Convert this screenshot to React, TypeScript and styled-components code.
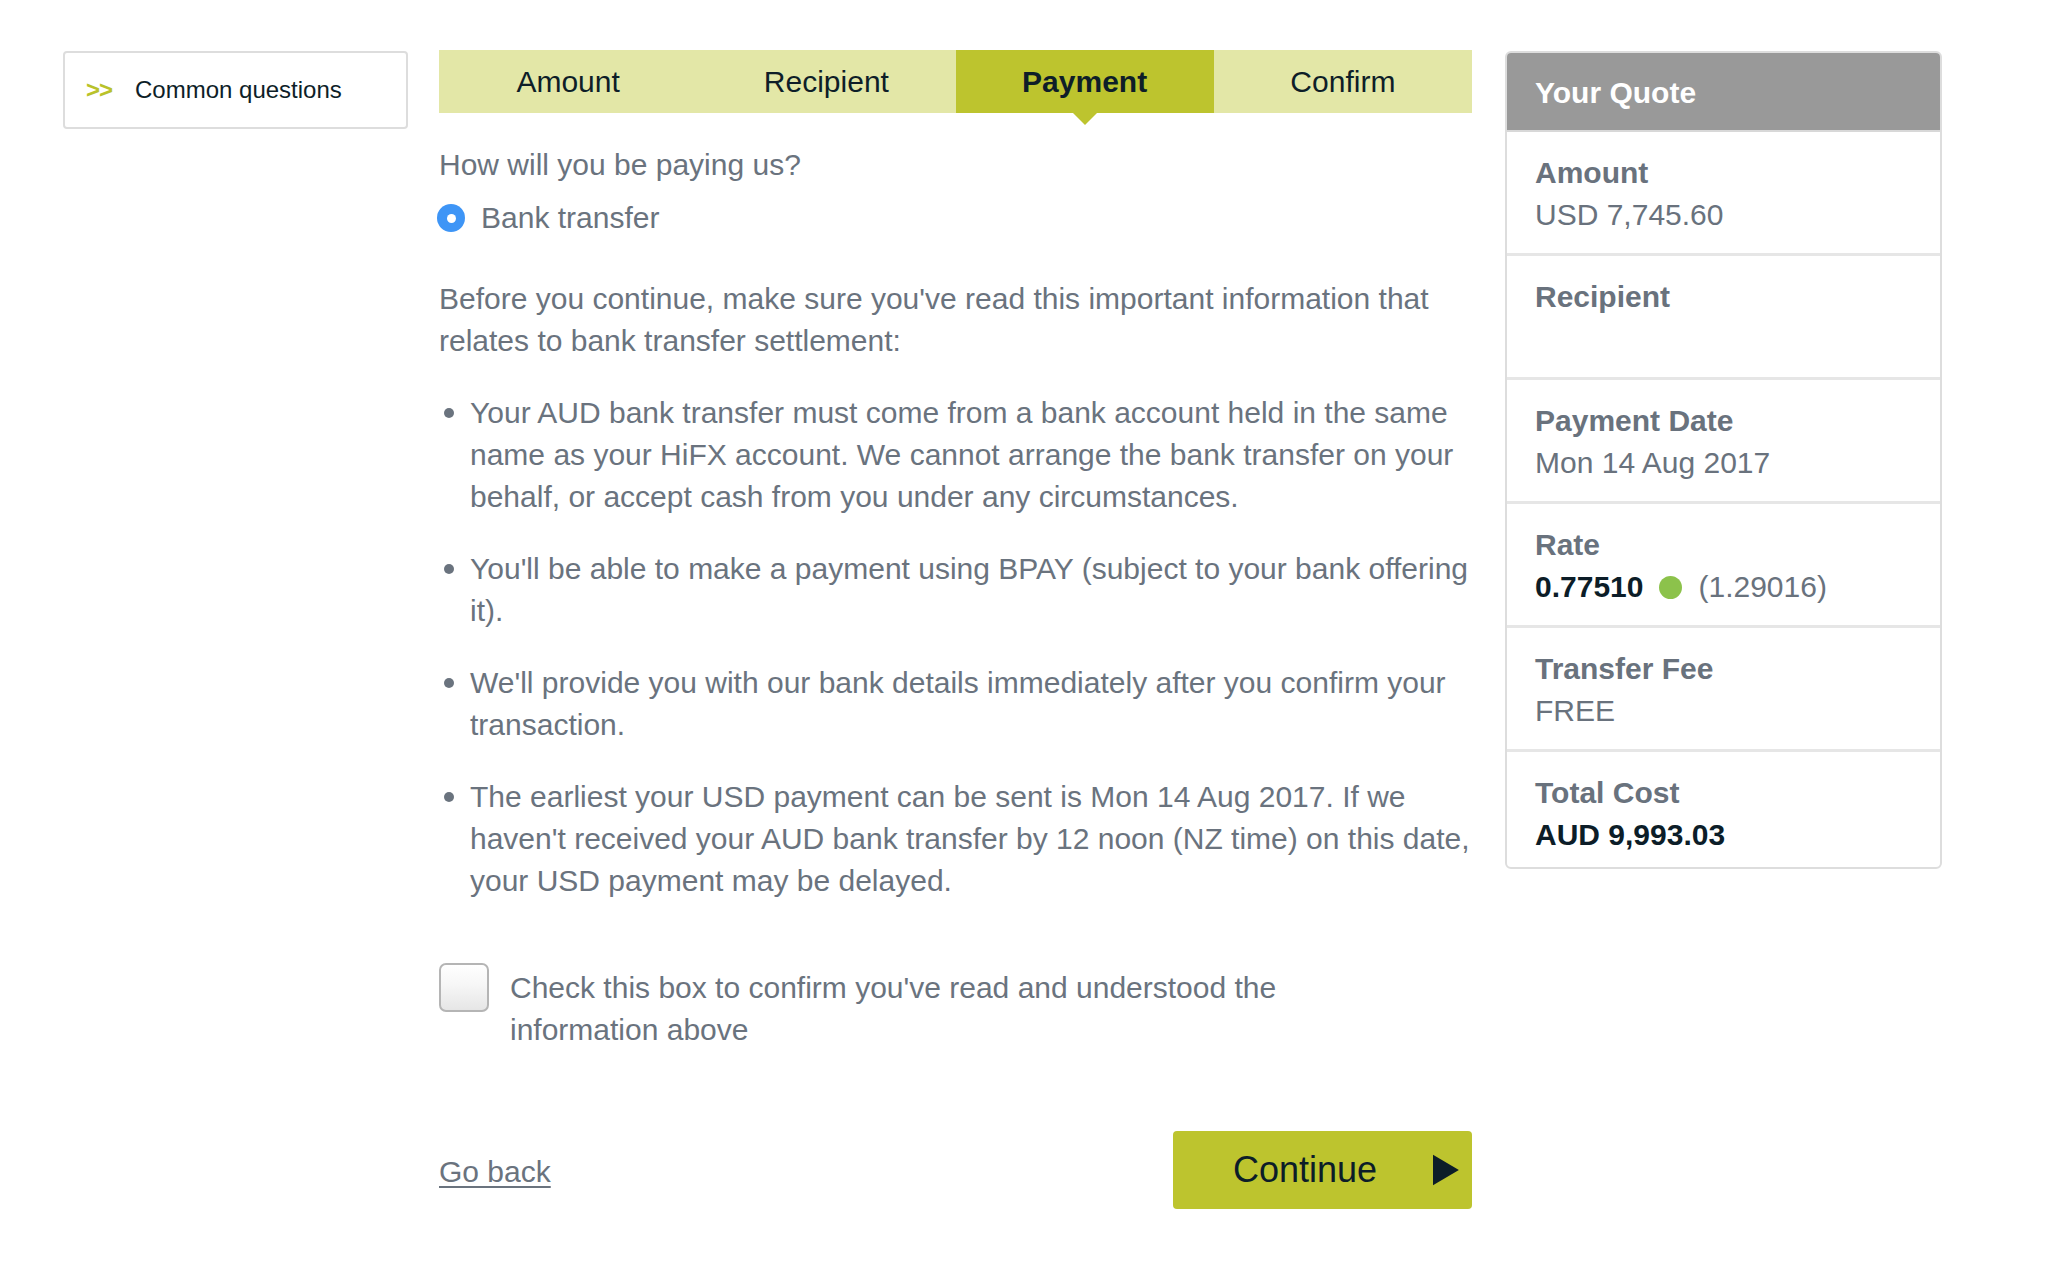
import React from "react";
import styled, { createGlobalStyle } from "styled-components";

const GlobalStyle = createGlobalStyle`
  html, body { margin: 0; padding: 0; background: #ffffff; }
  body { font-family: "Liberation Sans", Arial, Helvetica, sans-serif; color: #6a737e; }
  * { box-sizing: border-box; }
`;

const Page = styled.div`
  display: flex;
  align-items: flex-start;
  padding: 50px 0 0 63px;
  width: 2057px;
  min-height: 1280px;
`;

const Sidebar = styled.aside`
  width: 345px;
  flex: none;
  margin-top: 1px;
`;

const HelpBox = styled.a`
  display: flex;
  align-items: center;
  height: 78px;
  border: 2px solid #dddddd;
  border-radius: 4px;
  padding-left: 21px;
  font-size: 24px;
  color: #0e1e28;
  text-decoration: none;
`;

const Chevrons = styled.span`
  color: #b9c22a;
  font-weight: bold;
  font-size: 24px;
  letter-spacing: -1px;
  margin-right: 23px;
`;

const Main = styled.main`
  width: 1033px;
  flex: none;
  margin-left: 31px;
`;

const Tabs = styled.nav`
  display: grid;
  grid-template-columns: repeat(4, 1fr);
  height: 63px;
  background: #e3e7a7;
`;

const Tab = styled.div<{ $active?: boolean }>`
  position: relative;
  display: flex;
  align-items: center;
  justify-content: center;
  font-size: 30px;
  color: #0e1e28;
  font-weight: ${(p) => (p.$active ? "bold" : "normal")};
  background: ${(p) => (p.$active ? "#bdc42e" : "transparent")};
  &::after {
    content: "";
    display: ${(p) => (p.$active ? "block" : "none")};
    position: absolute;
    left: 50%;
    top: 100%;
    margin-left: -12px;
    border-left: 12px solid transparent;
    border-right: 12px solid transparent;
    border-top: 12px solid #bdc42e;
  }
`;

const Text = styled.p<{ $top?: number }>`
  margin: ${(p) => p.$top ?? 0}px 0 0;
  font-size: 30px;
  line-height: 42px;
  color: #6a737e;
`;

const RadioRow = styled.label`
  display: flex;
  align-items: center;
  gap: 16px;
  margin-top: 11px;
  font-size: 30px;
  line-height: 42px;
  color: #6a737e;
`;

const Radio = styled.span`
  width: 28px;
  height: 28px;
  margin-left: -2px;
  border-radius: 50%;
  background: #3e95f6;
  display: flex;
  align-items: center;
  justify-content: center;
  &::before {
    content: "";
    width: 9px;
    height: 9px;
    border-radius: 50%;
    background: #ffffff;
  }
`;

const List = styled.ul`
  list-style: none;
  margin: 30px 0 0;
  padding: 0;
`;

const Item = styled.li`
  display: flex;
  align-items: flex-start;
  font-size: 30px;
  line-height: 42px;
  color: #6a737e;
  & + & { margin-top: 30px; }
`;

const Dot = styled.span`
  flex: none;
  width: 10px;
  height: 10px;
  border-radius: 50%;
  background: #6a737e;
  margin: 16px 16px 0 5px;
`;

const CheckRow = styled.label`
  display: flex;
  align-items: flex-start;
  gap: 21px;
  margin-top: 61px;
`;

const CheckBox = styled.span`
  flex: none;
  width: 50px;
  height: 49px;
  border: 2px solid #b5b5b5;
  border-radius: 7px;
  background: linear-gradient(#ffffff, #f6f6f6 45%, #e6e6e6);
`;

const CheckText = styled.span`
  max-width: 820px;
  margin-top: 4px;
  font-size: 30px;
  line-height: 42px;
  color: #6a737e;
`;

const Actions = styled.div`
  display: flex;
  align-items: center;
  justify-content: space-between;
  margin-top: 80px;
`;

const BackLink = styled.a`
  font-size: 30px;
  color: #6a737e;
  text-decoration: underline;
  text-underline-offset: 4px;
  text-decoration-thickness: 2px;
  margin-top: 3px;
`;

const ContinueButton = styled.button`
  display: flex;
  align-items: center;
  width: 299px;
  height: 78px;
  padding: 0 13px 0 60px;
  gap: 56px;
  border: none;
  border-radius: 4px;
  background: #bdc42e;
  font-family: "Liberation Sans", Arial, sans-serif;
  font-size: 36px;
  color: #0c1d28;
  cursor: pointer;
`;

const Quote = styled.section`
  width: 437px;
  flex: none;
  margin-left: 33px;
  margin-top: 1px;
  border: 2px solid #dddddd;
  border-radius: 6px;
  overflow: hidden;
`;

const QuoteHeader = styled.h2`
  margin: 0;
  height: 79px;
  display: flex;
  align-items: center;
  padding: 2px 28px 0;
  background: #999999;
  border-bottom: 2px solid #d8d8d8;
  color: #ffffff;
  font-size: 30px;
  font-weight: bold;
`;

const QuoteRow = styled.div`
  padding: 20px 28px 17px;
  border-bottom: 3px solid #e6e6e6;
  min-height: 124px;
  &:last-child {
    border-bottom: none;
    min-height: 0;
    padding-bottom: 11px;
  }
`;

const QuoteLabel = styled.div`
  font-size: 30px;
  line-height: 42px;
  font-weight: bold;
  color: #69727d;
`;

const QuoteValue = styled.div<{ $strong?: boolean }>`
  display: flex;
  align-items: center;
  min-height: 42px;
  font-size: 30px;
  line-height: 42px;
  font-weight: ${(p) => (p.$strong ? "bold" : "normal")};
  color: ${(p) => (p.$strong ? "#0c1d28" : "#69727d")};
`;

const Inverse = styled.span`
  font-weight: normal;
  color: #69727d;
`;

const StatusDot = styled.span`
  width: 23px;
  height: 23px;
  border-radius: 50%;
  background: #8cc24b;
  margin: 0 16px;
`;

const PlayIcon = () => (
  <svg width="27" height="32" viewBox="0 0 27 32" aria-hidden="true">
    <polygon points="0,0 27,16 0,32" fill="#0c1d28" />
  </svg>
);

const bullets = [
  "Your AUD bank transfer must come from a bank account held in the same name as your HiFX account. We cannot arrange the bank transfer on your behalf, or accept cash from you under any circumstances.",
  "You'll be able to make a payment using BPAY (subject to your bank offering it).",
  "We'll provide you with our bank details immediately after you confirm your transaction.",
  "The earliest your USD payment can be sent is Mon 14 Aug 2017. If we haven't received your AUD bank transfer by 12 noon (NZ time) on this date, your USD payment may be delayed.",
];

export default function App() {
  return (
    <>
      <GlobalStyle />
      <Page>
        <Sidebar>
          <HelpBox href="#">
            <Chevrons>&gt;&gt;</Chevrons>
            Common questions
          </HelpBox>
        </Sidebar>

        <Main>
          <Tabs>
            <Tab>Amount</Tab>
            <Tab>Recipient</Tab>
            <Tab $active>Payment</Tab>
            <Tab>Confirm</Tab>
          </Tabs>

          <Text $top={31}>How will you be paying us?</Text>
          <RadioRow>
            <Radio />
            Bank transfer
          </RadioRow>

          <Text $top={39}>
            Before you continue, make sure you've read this important information that
            relates to bank transfer settlement:
          </Text>

          <List>
            {bullets.map((b) => (
              <Item key={b}>
                <Dot />
                <span>{b}</span>
              </Item>
            ))}
          </List>

          <CheckRow>
            <CheckBox />
            <CheckText>Check this box to confirm you've read and understood the information above</CheckText>
          </CheckRow>

          <Actions>
            <BackLink href="#">Go back</BackLink>
            <ContinueButton>
              Continue
              <PlayIcon />
            </ContinueButton>
          </Actions>
        </Main>

        <Quote>
          <QuoteHeader>Your Quote</QuoteHeader>
          <QuoteRow>
            <QuoteLabel>Amount</QuoteLabel>
            <QuoteValue>USD 7,745.60</QuoteValue>
          </QuoteRow>
          <QuoteRow>
            <QuoteLabel>Recipient</QuoteLabel>
            <QuoteValue />
          </QuoteRow>
          <QuoteRow>
            <QuoteLabel>Payment Date</QuoteLabel>
            <QuoteValue>Mon 14 Aug 2017</QuoteValue>
          </QuoteRow>
          <QuoteRow>
            <QuoteLabel>Rate</QuoteLabel>
            <QuoteValue $strong>
              0.77510
              <StatusDot />
              <Inverse>(1.29016)</Inverse>
            </QuoteValue>
          </QuoteRow>
          <QuoteRow>
            <QuoteLabel>Transfer Fee</QuoteLabel>
            <QuoteValue>FREE</QuoteValue>
          </QuoteRow>
          <QuoteRow>
            <QuoteLabel>Total Cost</QuoteLabel>
            <QuoteValue $strong>AUD 9,993.03</QuoteValue>
          </QuoteRow>
        </Quote>
      </Page>
    </>
  );
}
